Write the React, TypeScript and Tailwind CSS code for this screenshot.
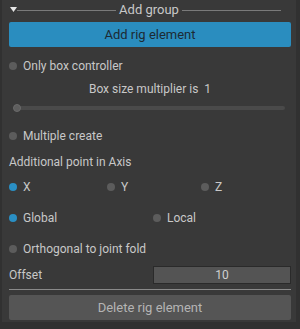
import React from 'react';

const Dot = ({ on }: { on?: boolean }) => (
  <span className={`w-[8px] h-[8px] rounded-full shrink-0 ${on ? 'bg-[#2a8fc4]' : 'bg-[#5c5c5c]'}`}></span>
);

const Radio = ({ label, on, className = '' }: { label: string; on?: boolean; className?: string }) => (
  <div className={`flex items-center h-[20px] ${className}`}>
    <Dot on={on} />
    <span className="ml-[6px]">{label}</span>
  </div>
);

export default function App() {
  return (
    <div className="w-[300px] h-[329px] bg-[#313131] overflow-hidden" style={{ fontFamily: 'Roboto, "Liberation Sans", sans-serif' }}>
      <div className="ml-[2px] w-[294px] h-[322px] bg-[#393939] pl-[7px] pr-[5px] flex flex-col text-[12px] text-[#c8c8c8]">
        <div className="h-[20px] flex items-center pr-[10px]">
          <svg width="7" height="6" viewBox="0 0 7 6" className="ml-[1px] shrink-0">
            <path d="M0 0 H7 L3.5 5 Z" fill="#e6e6e6" />
          </svg>
          <div className="flex-1 h-px bg-[#7a7a7a]"></div>
          <span className="mx-[3px] text-[13px] text-[#c8c8c8]">Add group</span>
          <div className="flex-1 h-px bg-[#7a7a7a]"></div>
        </div>

        <button className="mt-[2px] h-[25px] w-full rounded-[2px] bg-[#2a8dbf] text-[#1d2a33] text-[13px]">
          Add rig element
        </button>

        <Radio label="Only box controller" className="mt-[9px]" />

        <div className="mt-[3px] h-[20px] flex items-center justify-center">Box size multiplier is&nbsp;&nbsp;1</div>

        <div className="h-[18px] flex items-center px-[6px]">
          <div className="relative flex-1 h-[4px] rounded-full bg-[#4a4a4a]">
            <span className="absolute left-[-2px] top-[-2px] w-[8px] h-[8px] rounded-full bg-[#5e5e5e] border border-[#6a6a6a]"></span>
          </div>
        </div>

        <Radio label="Multiple create" className="mt-[9px]" />

        <div className="mt-[6px] h-[20px] flex items-center">Additional point in Axis</div>

        <div className="mt-[5px] flex">
          <Radio label="X" on className="w-[98px]" />
          <Radio label="Y" className="w-[94px]" />
          <Radio label="Z" />
        </div>

        <div className="mt-[11px] flex">
          <Radio label="Global" on className="w-[144px]" />
          <Radio label="Local" />
        </div>

        <Radio label="Orthogonal to joint fold" className="mt-[11px]" />

        <div className="mt-[7px] h-[18px] flex items-center">
          <span className="w-[144px]">Offset</span>
          <div className="flex-1 h-full bg-[#545454] border border-[#2a2a2a] flex items-center justify-center text-[#d0d0d0]">10</div>
        </div>

        <div className="mt-[5px] h-px bg-[#8a8a8a]"></div>

        <button className="mt-[5px] h-[25px] w-full rounded-[2px] bg-[#555555] text-[#b4b4b4] text-[13px]">
          Delete rig element
        </button>
      </div>
    </div>
  );
}
